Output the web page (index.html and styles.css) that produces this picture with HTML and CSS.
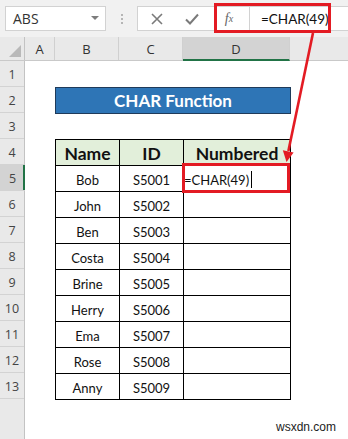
FILE: index.html
```html
<!DOCTYPE html>
<html>
<head>
<meta charset="utf-8">
<link rel="stylesheet" href="styles.css">
</head>
<body>
<div class="app">
  <div class="toolbar">
    <div class="namebox"><span class="nb-text">ABS</span><span class="dd"></span></div>
    <div class="grip"><i></i><i></i><i></i></div>
    <div class="fbar">
      <div class="fbtns">
        <span class="btn x">
          <svg width="12" height="12" viewBox="0 0 12 12"><path d="M1 1L11 11M11 1L1 11" stroke="#7a7a7a" stroke-width="1.6" fill="none"/></svg>
        </span>
        <span class="btn ok">
          <svg width="14" height="12" viewBox="0 0 14 12"><path d="M1 6.5L5 10.5L13 1.5" stroke="#7a7a7a" stroke-width="2" fill="none"/></svg>
        </span>
        <span class="btn fx"><i>f</i><sub>x</sub></span>
      </div>
      <div class="formula">=CHAR(49)</div>
    </div>
  </div>

  <div class="colheads">
    <div class="corner"><span class="tri"></span></div>
    <div class="ch ca">A</div>
    <div class="ch cb">B</div>
    <div class="ch cc">C</div>
    <div class="ch cd sel">D</div>
    <div class="ch ce"></div>
  </div>

  <div class="body">
    <div class="rowheads">
      <div class="rh">1</div>
      <div class="rh">2</div>
      <div class="rh">3</div>
      <div class="rh">4</div>
      <div class="rh sel">5</div>
      <div class="rh">6</div>
      <div class="rh">7</div>
      <div class="rh">8</div>
      <div class="rh">9</div>
      <div class="rh">10</div>
      <div class="rh">11</div>
      <div class="rh">12</div>
      <div class="rh">13</div>
      <div class="rh-fill"></div>
    </div>
    <div class="cells">
      <div class="r1"></div>
      <div class="title">CHAR Function</div>
      <div class="r3"></div>
      <div class="table">
        <div class="th">Name</div><div class="th">ID</div><div class="th">Numbered</div>
        <div class="td">Bob</div><div class="td">S5001</div><div class="td edit">=CHAR(49)<span class="cursor"></span><span class="redbox"></span></div>
        <div class="td">John</div><div class="td">S5002</div><div class="td"></div>
        <div class="td">Ben</div><div class="td">S5003</div><div class="td"></div>
        <div class="td">Costa</div><div class="td">S5004</div><div class="td"></div>
        <div class="td">Brine</div><div class="td">S5005</div><div class="td"></div>
        <div class="td">Herry</div><div class="td">S5006</div><div class="td"></div>
        <div class="td">Ema</div><div class="td">S5007</div><div class="td"></div>
        <div class="td">Rose</div><div class="td">S5008</div><div class="td"></div>
        <div class="td">Anny</div><div class="td">S5009</div><div class="td"></div>
      </div>
    </div>
  </div>

  <div class="topbox"></div>
  <svg class="arrow" width="348" height="439" viewBox="0 0 348 439">
    <line x1="313" y1="33" x2="288.4" y2="151" stroke="#e31b23" stroke-width="2.6"/>
    <polygon points="286.5,162 282.8,150.2 293.6,152.4" fill="#e31b23"/>
  </svg>
  <div class="watermark">wsxdn.com</div>
</div>
</body>
</html>
```

FILE: styles.css
```css
* { box-sizing: border-box; }
html, body { margin: 0; padding: 0; background: #fff; }
.app {
  position: relative;
  width: 348px;
  height: 439px;
  overflow: hidden;
  display: flex;
  flex-direction: column;
  font-family: "Open Sans", "Noto Sans", sans-serif;
}
.toolbar {
  height: 37px;
  flex: none;
  background: #f1f1f1;
  display: flex;
  align-items: flex-start;
  padding-top: 6px;
}
.namebox {
  margin-left: 5px;
  width: 101px;
  height: 25px;
  background: #fff;
  border: 1px solid #d2d2d2;
  display: flex;
  align-items: center;
  justify-content: space-between;
  padding: 0 6px 0 7px;
}
.nb-text { font-size: 14px; color: #333; }
.dd {
  width: 0; height: 0;
  border-left: 4px solid transparent;
  border-right: 4px solid transparent;
  border-top: 4px solid #7d7d7d;
  margin-top: -2px;
}
.grip {
  width: 31px;
  height: 25px;
  display: flex;
  flex-direction: column;
  align-items: center;
  justify-content: center;
  gap: 2px;
}
.grip i { display: block; width: 2px; height: 2px; background: #b5b5b5; }
.fbar {
  width: 211px;
  height: 25px;
  background: #fff;
  border: 1px solid #d2d2d2;
  border-right: none;
  display: flex;
  align-items: center;
}
.fbtns { display: flex; height: 100%; align-items: center; }
.btn { display: flex; align-items: center; justify-content: center; height: 100%; }
.btn.x { width: 37px; }
.btn.ok { width: 34px; }
.btn.fx {
  width: 40px;
  font-family: "Liberation Serif", serif;
  color: #666;
  font-size: 14px;
}
.btn.fx sub { font-size: 10px; font-style: italic; vertical-align: -1px; }
.formula {
  flex: 1;
  height: 100%;
  border-left: 1px solid #d2d2d2;
  padding-left: 11px;
  display: flex;
  align-items: center;
  font-family: "Lato", sans-serif;
  font-size: 13.5px;
  color: #111;
}
.colheads {
  height: 24px;
  flex: none;
  display: flex;
  background: #e9e9e9;
  border-bottom: 1px solid #c9c9c9;
}
.corner {
  width: 25px;
  border-right: 1px solid #c3c3c3;
  position: relative;
}
.tri {
  position: absolute;
  right: 3px;
  bottom: 3px;
  width: 0; height: 0;
  border-left: 12px solid transparent;
  border-bottom: 12px solid #b9b9b9;
}
.ch {
  border-right: 1px solid #d0d0d0;
  display: flex;
  align-items: center;
  justify-content: center;
  font-size: 13px;
  color: #333;
}
.ca { width: 30px; }
.cb { width: 64px; }
.cc { width: 64px; }
.cd { width: 107px; }
.ce { flex: 1; border-right: none; }
.ch.sel {
  background: #d3d3d3;
  border-bottom: 2px solid #217346;
  margin-bottom: -1px;
  padding-top: 1px;
}
.body { flex: 1; display: flex; min-height: 0; }
.rowheads {
  width: 25px;
  flex: none;
  background: #e9e9e9;
  border-right: 1px solid #c3c3c3;
  display: flex;
  flex-direction: column;
}
.rh {
  height: 26px;
  flex: none;
  border-bottom: 1px solid #d3d3d3;
  display: flex;
  align-items: center;
  justify-content: center;
  font-size: 12.5px;
  color: #444;
  padding-top: 2px;
}
.rh.sel {
  background: #d3d3d3;
  box-shadow: inset -2px 0 0 #217346;
  margin-right: -1px;
}
.rh-fill { flex: 1; }
.cells {
  flex: 1;
  padding-left: 30px;
  font-family: "Lato", sans-serif;
}
.r1 { height: 26px; }
.title {
  width: 236px;
  height: 27px;
  background: #2e75b6;
  border: 1px solid #1f3b5a;
  color: #fff;
  font-weight: 700;
  font-size: 17px;
  display: flex;
  align-items: center;
  justify-content: center;
}
.r3 { height: 25px; }
.table {
  display: grid;
  grid-template-columns: 64px 64px 107px;
  grid-auto-rows: 26px;
  width: 236px;
  border-top: 1px solid #000;
  border-left: 1px solid #000;
}
.th, .td {
  border-right: 1px solid #000;
  border-bottom: 1px solid #000;
  display: flex;
  align-items: center;
  justify-content: center;
}
.th {
  background: #e2efda;
  font-weight: 700;
  font-size: 17.5px;
  color: #111;
  padding-top: 1px;
}
.td { font-size: 13px; color: #111; padding-top: 2px; }
.td.edit {
  justify-content: flex-start;
  padding-left: 0;
  position: relative;
  font-size: 13px;
}
.cursor {
  display: inline-block;
  width: 1px;
  height: 17px;
  background: #000;
  margin-left: 2px;
}
.redbox {
  position: absolute;
  left: -2px;
  top: -3px;
  width: 108px;
  height: 30px;
  border: 3px solid #e31b23;
}
.topbox {
  position: absolute;
  left: 214px;
  top: 3px;
  width: 117px;
  height: 30px;
  border: 3px solid #e31b23;
}
.arrow { position: absolute; left: 0; top: 0; pointer-events: none; }
.watermark {
  position: absolute;
  left: 276px;
  top: 420px;
  font-family: "Liberation Sans", sans-serif;
  font-size: 12px;
  color: #222;
}
```
